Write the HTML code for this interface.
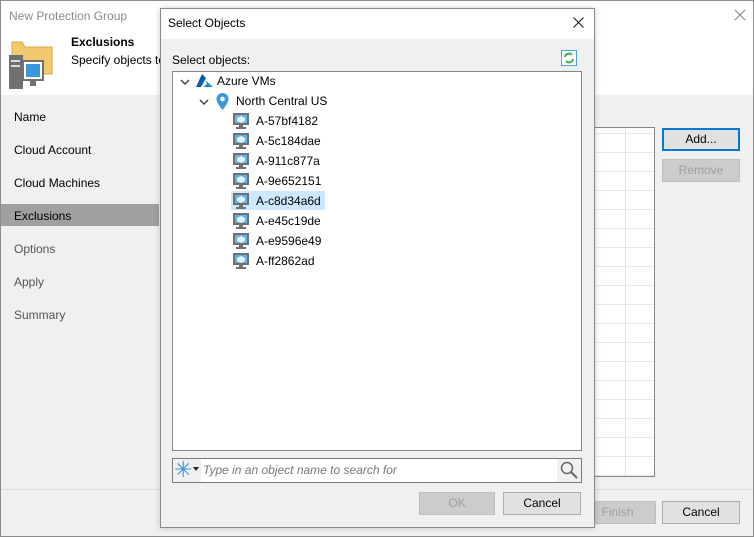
<!DOCTYPE html>
<html><head><meta charset="utf-8"><style>
*{margin:0;padding:0;box-sizing:border-box}
body{width:754px;height:537px;overflow:hidden;font-family:"Liberation Sans",sans-serif;font-size:12px;color:#000;background:#f0f0f0;position:relative}
.a{position:absolute}
.btn{position:absolute;background:#e1e1e1;border:1px solid #adadad;text-align:center;line-height:20px;font-size:12px}
.dis{background:#cccccc;border-color:#bfbfbf;color:#a0a0a0}
.nav{position:absolute;left:14px;font-size:12px}
.row{position:absolute;height:19px;line-height:19px}
</style></head><body>
<div class="a" style="left:0;top:0;width:754px;height:537px;border:1px solid #8c8c8c;background:#f0f0f0"></div>
<div class="a" style="left:1px;top:1px;width:752px;height:94px;background:#fff"></div>
<div class="a" style="left:9px;top:9px;color:#8a8a8a;font-size:12px">New Protection Group</div>
<svg class="a" style="left:734px;top:9px" width="12" height="12"><path d="M1 1l10 10M11 1L1 11" stroke="#888" stroke-width="1.1"/></svg>
<svg class="a" style="left:9px;top:40px" width="50" height="52">
<path d="M3 2h10l3 5h27v27H3z" fill="#f3c96f" stroke="#d9a84a"/>
<rect x="0" y="15" width="14" height="34" fill="#707070"/>
<rect x="2" y="20" width="9" height="2" fill="#ddd"/><rect x="2" y="25" width="9" height="2" fill="#ddd"/>
<rect x="14" y="21" width="20" height="19" fill="#fff" stroke="#707070" stroke-width="2"/>
<rect x="17" y="24" width="14" height="13" fill="#3a96dd"/>
<rect x="21" y="41" width="6" height="5" fill="#707070"/>
</svg>
<div class="a" style="left:71px;top:35px;font-weight:bold">Exclusions</div>
<div class="a" style="left:71px;top:53px">Specify objects to</div>
<div class="nav" style="top:110px">Name</div>
<div class="nav" style="top:143px">Cloud Account</div>
<div class="nav" style="top:176px">Cloud Machines</div>
<div class="a" style="left:1px;top:204px;width:158px;height:22px;background:#a0a0a0"></div>
<div class="nav" style="top:209px">Exclusions</div>
<div class="nav" style="top:242px;color:#555">Options</div>
<div class="nav" style="top:275px;color:#555">Apply</div>
<div class="nav" style="top:308px;color:#555">Summary</div>
<div class="a" style="left:594px;top:127px;width:61px;height:350px;background:#fff;border:1px solid #828790;
background-image:linear-gradient(#e8e8e8 1px,transparent 1px);background-size:100% 19px;background-position:0 43px"></div>
<div class="a" style="left:625px;top:128px;width:1px;height:348px;background:#e4e4e4"></div>
<div class="btn" style="left:662px;top:128px;width:78px;height:23px;border:2px solid #0078d7;line-height:19px">Add...</div>
<div class="btn dis" style="left:662px;top:159px;width:78px;height:23px">Remove</div>
<div class="a" style="left:1px;top:489px;width:752px;height:1px;background:#dcdcdc"></div>
<div class="btn dis" style="left:579px;top:501px;width:77px;height:23px">Finish</div>
<div class="btn" style="left:662px;top:501px;width:78px;height:23px">Cancel</div>
<div class="a" style="left:160px;top:8px;width:435px;height:520px;background:#f0f0f0;border:1px solid #8a8a8a;box-shadow:0 0 6px rgba(0,0,0,.2)"></div>
<div class="a" style="left:161px;top:9px;width:433px;height:30px;background:#fff"></div>
<div class="a" style="left:168px;top:16px">Select Objects</div>
<svg class="a" style="left:573px;top:17px" width="11" height="11"><path d="M.5 .5l10 10M10.5 .5l-10 10" stroke="#222" stroke-width="1.2"/></svg>
<div class="a" style="left:172px;top:53px">Select objects:</div>
<svg class="a" style="left:561px;top:50px" width="16" height="16"><rect x=".5" y=".5" width="15" height="15" fill="#fff" stroke="#4aa3df"/><path d="M4 7a4 4 0 0 1 7-2M12 9a4 4 0 0 1-7 2" stroke="#3cb44b" stroke-width="2" fill="none"/></svg>
<div class="a" style="left:172px;top:71px;width:410px;height:380px;background:#fff;border:1px solid #828790"></div>
<svg class="a" style="left:180px;top:77px" width="10" height="10"><path d="M1 3l4 4 4-4" stroke="#444" stroke-width="1.5" fill="none"/></svg>
<svg class="a" style="left:196px;top:74px" width="17" height="14"><path d="M6 0L0 13h5l5-9z" fill="#0a5aa8"/><path d="M9 6l2 4-4 3h10z" fill="#1f86d6"/></svg>
<div class="row" style="left:217px;top:72px">Azure VMs</div>
<svg class="a" style="left:199px;top:97px" width="10" height="10"><path d="M1 3l4 4 4-4" stroke="#444" stroke-width="1.5" fill="none"/></svg>
<svg class="a" style="left:216px;top:93px" width="13" height="17"><path d="M6.5 0a6 6 0 0 1 6 6c0 4-6 11-6 11S.5 10 .5 6a6 6 0 0 1 6-6z" fill="#3a96dd"/><circle cx="6.5" cy="6" r="2.3" fill="#fff"/></svg>
<div class="row" style="left:236px;top:92px">North Central US</div>
<div class="a" style="left:231px;top:191px;width:94px;height:19px;background:#cce8ff"></div>
<div id="vms"></div>
<script>
var n=["A-57bf4182","A-5c184dae","A-911c877a","A-9e652151","A-c8d34a6d","A-e45c19de","A-e9596e49","A-ff2862ad"],h="";
n.forEach(function(s,i){var y=112+i*20;
h+='<svg class="a" style="left:233px;top:'+(y+1)+'px" width="16" height="17"><rect x="0" y="0" width="16" height="12" fill="#707070"/><rect x="2" y="2" width="12" height="8" fill="#5fb6ef"/><path d="M8 3l4 2v3l-4 2-4-2V5z" fill="#e4f3fd"/><rect x="6" y="12" width="4" height="2" fill="#707070"/><rect x="3" y="14" width="10" height="2" fill="#707070"/></svg><div class="row" style="left:256px;top:'+y+'px">'+s+'</div>';});
document.getElementById("vms").innerHTML=h;
</script>
<div class="a" style="left:172px;top:458px;width:410px;height:25px;background:#fff;border:1px solid #7a7a7a"></div>
<div class="a" style="left:173px;top:459px;width:28px;height:23px;background:#f0f0f0"></div>
<div class="a" style="left:174px;top:458px;color:#3a96dd;font-size:22px;line-height:24px">✳</div>
<div class="a" style="left:193px;top:467px;width:0;height:0;border-left:3px solid transparent;border-right:3px solid transparent;border-top:4px solid #222"></div>
<div class="a" style="left:203px;top:463px;color:#777;font-style:italic">Type in an object name to search for</div>
<div class="a" style="left:557px;top:459px;width:24px;height:23px;background:#f0f0f0"></div>
<svg class="a" style="left:560px;top:461px" width="18" height="18"><circle cx="7" cy="7" r="5.5" stroke="#666" stroke-width="1.5" fill="none"/><path d="M11 11l6 6" stroke="#666" stroke-width="2"/></svg>
<div class="btn dis" style="left:419px;top:492px;width:76px;height:23px">OK</div>
<div class="btn" style="left:503px;top:492px;width:78px;height:23px">Cancel</div>
</body></html>
